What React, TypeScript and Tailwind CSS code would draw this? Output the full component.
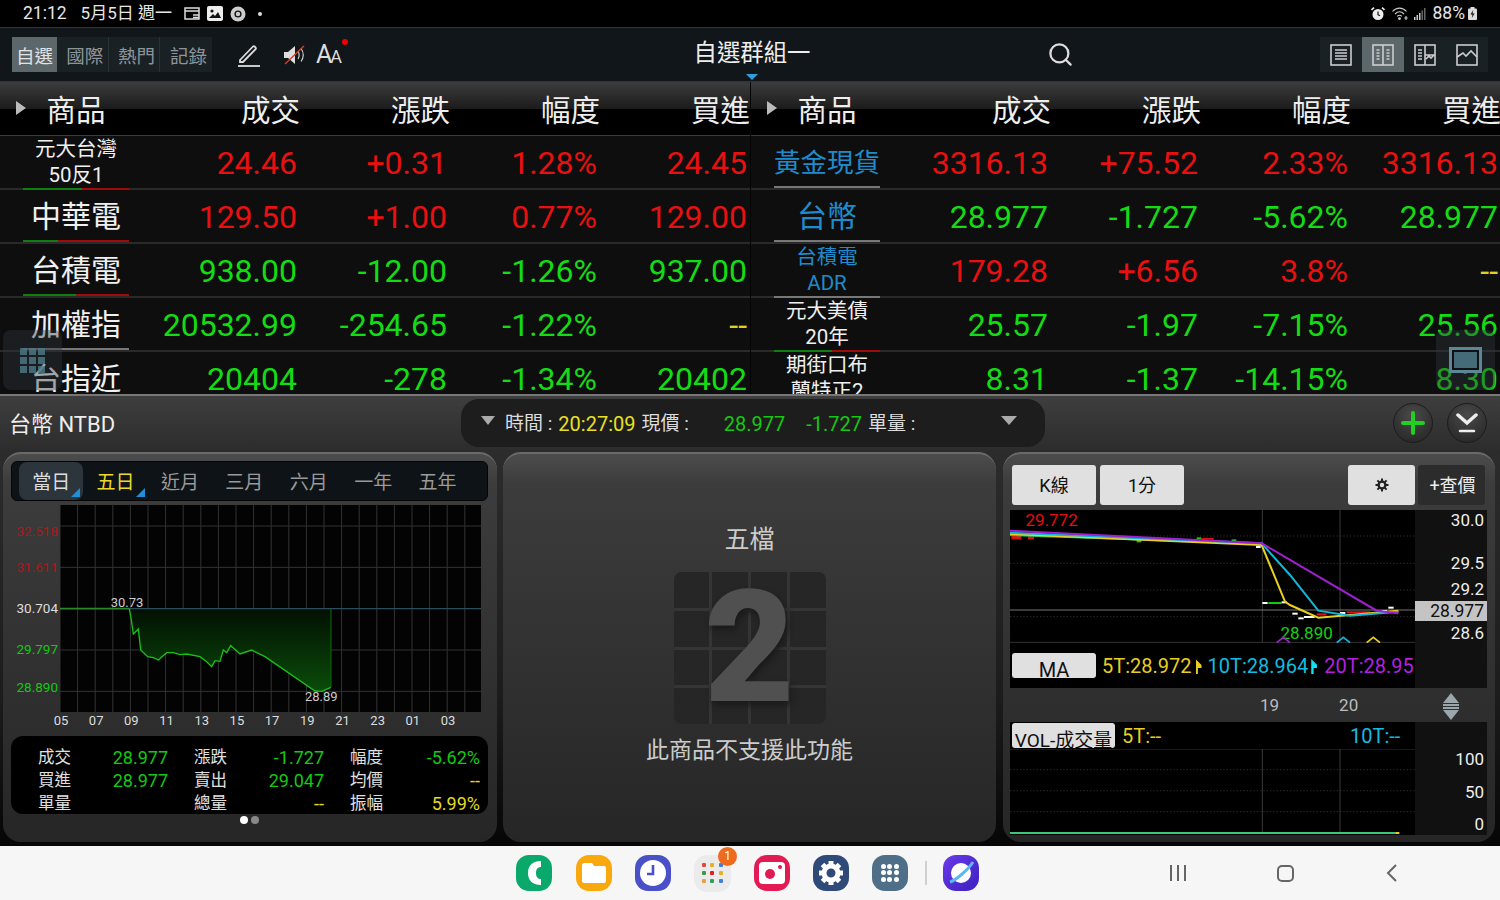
import { Search } from 'lucide-react';

type Row = {
  name: string[];
  blue?: boolean;
  small?: boolean;
  bar: string;
  cells: [string, string, string, string];
  color: string;
};

const RED = 'text-[#e81010]';
const GREEN = 'text-[#14dc14]';

const leftRows: Row[] = [
  { name: ['元大台灣', '50反1'], small: true, bar: 'w-[59px]', color: RED, cells: ['24.46', '+0.31', '1.28%', '24.45'] },
  { name: ['中華電'], bar: 'w-[35px]', color: RED, cells: ['129.50', '+1.00', '0.77%', '129.00'] },
  { name: ['台積電'], bar: 'w-[53px]', color: GREEN, cells: ['938.00', '-12.00', '-1.26%', '937.00'] },
  { name: ['加權指'], bar: 'gray', color: GREEN, cells: ['20532.99', '-254.65', '-1.22%', '--'] },
  { name: ['台指近'], bar: 'gray', color: GREEN, cells: ['20404', '-278', '-1.34%', '20402'] },
];

const rightRows: Row[] = [
  { name: ['黃金現貨'], blue: true, bar: 'gray', color: RED, cells: ['3316.13', '+75.52', '2.33%', '3316.13'] },
  { name: ['台幣'], blue: true, bar: 'gray', color: GREEN, cells: ['28.977', '-1.727', '-5.62%', '28.977'] },
  { name: ['台積電', 'ADR'], blue: true, small: true, bar: 'gray', color: RED, cells: ['179.28', '+6.56', '3.8%', '--'] },
  { name: ['元大美債', '20年'], small: true, bar: 'w-[58px]', color: GREEN, cells: ['25.57', '-1.97', '-7.15%', '25.56'] },
  { name: ['期街口布', '蘭特正2'], small: true, bar: 'gray', color: GREEN, cells: ['8.31', '-1.37', '-14.15%', '8.30'] },
];

const COLS = 'grid grid-cols-[152px_148px_150px_150px_150px]';

const nameSize = (row: Row) => {
  if (row.small) return 'text-[20.5px] leading-[26px]';
  if (row.name[0].length > 3) return 'pt-[4px] text-[26.5px] leading-[28px]';
  return 'pt-[4px] text-[30px] leading-[28px]';
};

const WatchTable = ({ rows, width }: { rows: Row[]; width: string }) => (
  <div className={`${width} shrink-0 overflow-hidden`}>
    <div className={`${COLS} relative h-[54px] items-center border-b border-[#3a3a3a] bg-[linear-gradient(#3c3c3c,#1c1c1c_50%,#000_52%)] pt-[5px] text-[29.5px] leading-[36px] text-[#eee]`}>
      <span className="absolute left-[16px] top-[19px] size-0 border-y-[7px] border-l-[10px] border-y-transparent border-l-[#bbb]" />
      <span className="text-center">商品</span>
      <span className="text-right">成交</span>
      <span className="text-right">漲跌</span>
      <span className="text-right">幅度</span>
      <span className="text-right">買進</span>
    </div>
    {rows.map((row) => (
      <div key={row.name[0]} className={`${COLS} h-[54px] border-b-2 border-[#2a2a2a] bg-[#0e0e0e]`}>
        <div className="flex h-[52px] flex-col items-center">
          <div
            className={`flex flex-1 flex-col items-center justify-center ${row.blue ? 'text-[#1e8ccc]' : 'text-[#f0f0f0]'} ${nameSize(row)}`}
          >
            {row.name.map((line) => (
              <span key={line}>{line}</span>
            ))}
          </div>
          {row.bar === 'gray' ? (
            <div className="h-[2px] w-[106px] shrink-0 bg-[#777]" />
          ) : (
            <div className="flex h-[2px] w-[106px] shrink-0 bg-[#a00c0c]">
              <div className={`${row.bar} bg-[#0f7d0f]`} />
            </div>
          )}
        </div>
        {row.cells.map((cell, i) => (
          <div
            key={i}
            className={`flex items-center justify-end pr-[3px] pt-[2px] text-[32px] leading-[28px] ${cell === '--' ? 'text-[#e0d020]' : row.color}`}
          >
            {cell}
          </div>
        ))}
      </div>
    ))}
  </div>
);

const StatusBar = () => (
  <div className="flex h-[27px] items-center bg-black pl-[23px] pr-[23px] text-[17.5px] text-[#e6e6e6]">
    <span>21:12</span>
    <span className="ml-[14px] text-[17px]">5月5日 週一</span>
    <svg className="ml-[12px]" width="16" height="13" viewBox="0 0 16 13" fill="none" stroke="#ddd" strokeWidth="1.5">
      <rect x="1" y="1" width="14" height="11" />
      <path d="M1 4h14M9 8h6M9 10.5h6" />
    </svg>
    <svg className="ml-[7px]" width="16" height="15" viewBox="0 0 16 15">
      <rect width="16" height="15" rx="2" fill="#eee" />
      <circle cx="5" cy="5" r="1.6" fill="#111" />
      <path d="M2 12l4-4 2 2 3-4 3 6z" fill="#111" />
    </svg>
    <svg className="ml-[7px]" width="16" height="16" viewBox="0 0 16 16" fill="none">
      <circle cx="8" cy="8" r="7.5" fill="#ccc" />
      <circle cx="8" cy="8" r="3.6" fill="#111" />
      <circle cx="8" cy="8" r="2.2" fill="#ccc" />
    </svg>
    <span className="ml-[12px] size-[4px] rounded-full bg-[#ddd]" />
    <svg className="ml-auto" width="14" height="14" viewBox="0 0 14 14">
      <circle cx="7" cy="7.5" r="5.5" fill="#eee" />
      <path d="M7 4.5v3.2l2 1" stroke="#111" strokeWidth="1.2" fill="none" />
      <path d="M0.5 3L3 0.7M13.5 3L11 0.7" stroke="#eee" strokeWidth="1.6" />
    </svg>
    <svg className="ml-[7px]" width="17" height="14" viewBox="0 0 17 14" fill="none" stroke="#ccc" strokeWidth="1.1">
      <path d="M0.5 4.5C4.5 0 10.5 0 14.5 4.5M3 7c2.8-3 6.2-3 9 0M5.2 9.4c1.5-1.5 3.1-1.5 4.6 0" />
      <circle cx="7.5" cy="11.6" r="0.9" fill="#ccc" />
      <path d="M14 9v4M12.3 11h3.4" />
    </svg>
    <svg className="ml-[5px]" width="12" height="12" viewBox="0 0 12 12" fill="#ccc">
      <rect x="0" y="9" width="1.5" height="3" />
      <rect x="2.5" y="7" width="1.5" height="5" />
      <rect x="5" y="5" width="1.5" height="7" />
      <rect x="7.5" y="2.5" width="1.5" height="9.5" fill="#666" />
      <rect x="10" y="0" width="1.5" height="12" fill="#666" />
    </svg>
    <span className="ml-[7px]">88%</span>
    <svg className="ml-[3px]" width="9" height="13" viewBox="0 0 9 13">
      <rect x="2.5" y="0" width="4" height="2" fill="#ddd" />
      <rect x="0" y="1.5" width="9" height="11.5" rx="1" fill="#ddd" />
      <path d="M5.2 3L2.5 7.5h2L3.8 11l2.8-4.5h-2z" fill="#111" />
    </svg>
  </div>
);

const tabs = ['自選', '國際', '熱門', '記錄'];

const ViewIcon = ({ kind }: { kind: number }) => (
  <svg width="22" height="22" viewBox="0 0 22 22" fill="none" stroke="#ccc" strokeWidth="1.6">
    <rect x="1" y="1" width="20" height="20" />
    {kind === 0 && <path d="M5 6h12M5 9h12M5 12h12M5 15h12" />}
    {kind === 1 && <path d="M11 1v20M4.5 6h3M4.5 9h3M4.5 12h3M4.5 15h3M14.5 6h3M14.5 9h3M14.5 12h3M14.5 15h3" />}
    {kind === 2 && <path d="M11 1v20M4 6h4M4 9h4M4 12h4M4 15h4M11 11h10M12 15l3-3 2 2 3-3" />}
    {kind === 3 && <path d="M1 13l6-4 3 3 5-5 6 6" />}
  </svg>
);

const Toolbar = () => (
  <div className="relative grid h-[55px] grid-cols-[1fr_auto_1fr] items-center border-y border-[#333] bg-[#11161a] pl-[12px] pr-[12px]">
    <div className="flex items-center">
      <div className="flex h-[35px] w-[200px] items-center bg-[#1a2125] text-[18.5px] leading-[24px] text-[#8e9599]">
        {tabs.map((tab, i) => (
          <span
            key={tab}
            className={`flex h-full items-center justify-center pt-[4px] ${i === 0 ? 'w-[45px] bg-[#5c676c] text-[#e2e2e2]' : 'w-[51.6px] border-r border-[#2a3338] pl-[5px] last:border-r-0'}`}
          >
            {tab}
          </span>
        ))}
      </div>
      <svg className="ml-[26px]" width="22" height="24" viewBox="0 0 22 24" fill="none" stroke="#ddd" strokeWidth="1.8">
        <path d="M2 17L15 3.5c1-1 3.6 1.4 2.6 2.6L5 19H2z" />
        <path d="M0 23h22" />
      </svg>
      <svg className="ml-[23px]" width="24" height="22" viewBox="0 0 24 22">
        <path d="M1 8h4l7-6v18l-7-6H1z" fill="#ddd" />
        <path d="M15 7c1.500 2 1.500 6 0 8M18 4.500c3 3.500 3 9.500 0 13" stroke="#ddd" strokeWidth="1.100" fill="none" />
        <path d="M2 20L21 2" stroke="#d04020" strokeWidth="1.400" />
      </svg>
      <span className="relative ml-[9px] flex items-baseline text-[#ddd]">
        <span className="text-[25px] leading-none">A</span>
        <span className="-ml-[2px] text-[18px] leading-none">A</span>
        <span className="absolute -right-[6px] -top-[3px] size-[6px] rounded-full bg-[#f00000]" />
      </span>
    </div>
    <span className="translate-x-[2px] -translate-y-[1px] text-[23.4px] text-[#eee]">自選群組一</span>
    <div className="flex items-center">
      <Search className="ml-[239px] text-[#ddd]" size={27} strokeWidth={2} />
      <div className="ml-auto flex h-[35px] w-[168px] items-center bg-[#1a2125]">
        {[0, 1, 2, 3].map((kind) => (
          <span key={kind} className={`flex h-full w-[42px] items-center justify-center ${kind === 1 ? 'bg-[#5c676c]' : ''}`}>
            <ViewIcon kind={kind} />
          </span>
        ))}
      </div>
    </div>
    <span className="absolute bottom-[1px] left-[746px] size-0 border-x-[6px] border-t-[6px] border-x-transparent border-t-[#2f9fe0]" />
  </div>
);

const IntradayChart = () => {
  const line =
    '388,326 394,360 400,402 415,387 422,450 443,470 460,473 475,480 500,458 520,458 540,464 560,462 600,470 620,485 635,500 645,482 660,484 670,450 680,458 692,437 720,462 755,450 795,470 945,573 965,574 993,562';
  return (
    <svg width="421" height="207" viewBox="180 15 1263 621" className="shrink-0">
      <defs>
        <linearGradient id="fill" x1="0" y1="0" x2="0" y2="1">
          <stop offset="0" stopColor="#021002" />
          <stop offset="1" stopColor="#0a4c0a" />
        </linearGradient>
      </defs>
      <rect x="180" y="15" width="1263" height="621" fill="#030303" />
      {Array.from({ length: 24 }, (_, i) => (
        <line key={i} x1={180 + i * 52.8} x2={180 + i * 52.8} y1="15" y2="636" stroke="#333" strokeWidth="3" />
      ))}
      {[78, 202, 450, 574].map((y) => (
        <line key={y} x1="180" x2="1443" y1={y} y2={y} stroke="#333" strokeWidth="3" />
      ))}
      <polygon points={`388,326 ${line} 993,326`} fill="url(#fill)" />
      <line x1="388" x2="1443" y1="326" y2="326" stroke="#2f4c5c" strokeWidth="4" />
      <line x1="180" x2="388" y1="326" y2="326" stroke="#2a8a2a" strokeWidth="5" />
      <polyline points={line} fill="none" stroke="#18c018" strokeWidth="4" />
      <line x1="993" x2="993" y1="326" y2="562" stroke="#0d6a0d" strokeWidth="3" />
      <text x="381" y="322" textAnchor="middle" fontSize="39" fill="#ccc">30.73</text>
      <text x="964" y="604" textAnchor="middle" fontSize="39" fill="#ccc">28.89</text>
    </svg>
  );
};

const priceAxis = [
  { label: '32.518', cls: 'mt-[18px] text-[#a81a1a]' },
  { label: '31.611', cls: 'mt-[20px] text-[#a81a1a]' },
  { label: '30.704', cls: 'mt-[25px] text-[#ddd]' },
  { label: '29.797', cls: 'mt-[25px] text-[#14c814]' },
  { label: '28.890', cls: 'mt-[22px] text-[#14c814]' },
];

const ranges = ['當日', '五日', '近月', '三月', '六月', '一年', '五年'];

const quoteCells = [
  ['成交', '28.977', '漲跌', '-1.727', '幅度', '-5.62%'],
  ['買進', '28.977', '賣出', '29.047', '均價', '--'],
  ['單量', '', '總量', '--', '振幅', '5.99%'],
];

const PANEL =
  'relative h-[390px] rounded-[18px] border-t-2 border-[#6a6a6a] bg-[linear-gradient(#4c4c4c,#3c3c3c_30px,#262626)]';

const LeftPanel = () => (
  <div className={`${PANEL} w-[494px] pl-[8px] pr-[9px] pt-[7px]`}>
    <div className="flex h-[40px] rounded-[6px] border border-[#050505] bg-[#0e1317] pl-[7px] text-[19px] leading-[26px] text-[#9a9a9a]">
      {ranges.map((r, i) => (
        <span
          key={r}
          className={`relative flex w-[64.4px] items-center justify-center pt-[3px] ${i === 0 ? 'rounded-[8px] bg-[#2b353b] text-[#ddd]' : ''} ${i === 1 ? 'text-[#eed82a]' : ''}`}
        >
          {r}
          {i < 2 && (
            <span className="absolute bottom-[3px] right-[3px] size-0 border-b-[9px] border-l-[9px] border-b-[#1e90d8] border-l-transparent" />
          )}
        </span>
      ))}
    </div>
    <div className="mt-[4px] flex h-[207px]">
      <div className="flex w-[47px] flex-col items-end text-[13.5px] leading-[16px]">
        {priceAxis.map((p) => (
          <span key={p.label} className={p.cls}>
            {p.label}
          </span>
        ))}
      </div>
      <span className="w-[2px]" />
      <IntradayChart />
    </div>
    <div className="flex h-[17px] pl-[32.400px] text-[13px] leading-[17px] text-[#ddd]">
      {['05', '07', '09', '11', '13', '15', '17', '19', '21', '23', '01', '03'].map((t) => (
        <span key={t} className="w-[35.2px] text-center">
          {t}
        </span>
      ))}
    </div>
    <div className="mt-[7px] grid h-[78px] grid-cols-[60px_97px_59px_97px_59px_97px] content-center rounded-[12px] bg-black pt-[10px] text-[18px] leading-[23px]">
      {quoteCells.flat().map((cell, i) => {
        const isLabel = i % 2 === 0;
        const color = isLabel
          ? 'text-[#e0e0e0] text-[16.5px]'
          : cell === '--' || cell === '5.99%'
            ? 'text-[#e4dc20]'
            : 'text-[#14c814]';
        return (
          <span key={i} className={`text-right ${color}`}>
            {cell}
          </span>
        );
      })}
    </div>
    <div className="mt-[2px] flex justify-center gap-[3px]">
      <span className="size-[8px] rounded-full bg-white" />
      <span className="size-[8px] rounded-full bg-[#888]" />
    </div>
  </div>
);

const MiddlePanel = () => (
  <div className={`${PANEL} flex w-[493px] flex-col items-center pt-[69px]`}>
    <span className="text-[25px] leading-[34px] text-[#ccc]">五檔</span>
    <div className="relative mt-[15px] grid size-[152px] grid-cols-4 grid-rows-4 gap-[3px] overflow-hidden rounded-[8px] bg-[#353535]">
      {Array.from({ length: 16 }, (_, i) => (
        <span key={i} className="bg-[#262626]" />
      ))}
      <span className="absolute inset-0 flex items-center justify-center text-[156px] font-black leading-none text-[#505050] [text-shadow:2px_4px_6px_#1a1a1a]">
        2
      </span>
    </div>
    <span className="mt-[11px] text-[23px] leading-[32px] text-[#ccc]">此商品不支援此功能</span>
  </div>
);

const KChart = () => (
  <svg width="405" height="133" viewBox="30 330 1215 399" className="block">
    <rect x="30" y="330" width="1215" height="399" fill="#000" />
    {[408, 490, 570, 650].map((y) => (
      <line key={y} x1="30" x2="1245" y1={y} y2={y} stroke="#444" strokeWidth="2" strokeDasharray="4 6" />
    ))}
    {[787, 1020].map((x) => (
      <line key={x} x1={x} x2={x} y1="330" y2="729" stroke="#3a3a3a" strokeWidth="3" />
    ))}
    <line x1="30" x2="1245" y1="630" y2="630" stroke="#777" strokeWidth="3" />
    <line x1="30" x2="1245" y1="727" y2="727" stroke="#333" strokeWidth="3" />
    <g fill="#e01010">
      <rect x="34" y="404" width="30" height="14" />
      <rect x="84" y="406" width="18" height="12" />
      <rect x="120" y="406" width="34" height="6" />
      <rect x="605" y="414" width="36" height="5" />
      <rect x="950" y="640" width="30" height="6" />
      <rect x="1040" y="634" width="70" height="5" />
      <rect x="1170" y="632" width="26" height="6" />
    </g>
    <g fill="#14c814">
      <rect x="410" y="420" width="14" height="7" />
      <rect x="590" y="412" width="14" height="5" />
      <rect x="695" y="418" width="14" height="5" />
      <rect x="750" y="428" width="26" height="7" />
      <rect x="805" y="606" width="40" height="6" />
    </g>
    <g fill="#fff">
      <rect x="768" y="438" width="14" height="6" />
      <rect x="787" y="606" width="16" height="6" />
      <rect x="845" y="604" width="16" height="6" />
      <rect x="877" y="638" width="16" height="6" />
      <rect x="895" y="652" width="16" height="6" />
      <rect x="912" y="648" width="32" height="6" />
      <rect x="1020" y="636" width="16" height="6" />
      <rect x="1145" y="630" width="16" height="6" />
      <rect x="1165" y="620" width="16" height="6" />
    </g>
    <polyline points="30,405 750,430 790,436" fill="none" stroke="#20c060" strokeWidth="6" />
    <polyline points="30,402 785,435 855,605 870,615 955,653 1050,645 1195,632" fill="none" stroke="#e8d020" strokeWidth="6" />
    <polyline points="30,398 785,430 870,525 955,632 1050,647 1195,635" fill="none" stroke="#10b8d8" strokeWidth="6" />
    <polyline points="30,392 785,430 1130,632 1195,640" fill="none" stroke="#a020d0" strokeWidth="6" />
    <text x="155" y="378" textAnchor="middle" fontSize="51" fill="#e01010">29.772</text>
    <text x="920" y="718" textAnchor="middle" fontSize="51" fill="#14d014">28.890</text>
    <path d="M830 728l20-16 20 16" fill="none" stroke="#a020d0" strokeWidth="5" />
    <path d="M1010 728l20-16 20 16" fill="none" stroke="#10b8d8" strokeWidth="5" />
    <path d="M1100 728l20-16 20 16" fill="none" stroke="#e8d020" strokeWidth="5" />
  </svg>
);

const VolChart = () => (
  <svg width="405" height="86" viewBox="30 328 1215 258" className="block">
    <rect x="30" y="328" width="1215" height="258" fill="#000" />
    <line x1="30" x2="1245" y1="328" y2="328" stroke="#333" strokeWidth="3" />
    {[390, 453, 516].map((y) => (
      <line key={y} x1="30" x2="1245" y1={y} y2={y} stroke="#444" strokeWidth="2" strokeDasharray="4 6" />
    ))}
    {[787, 1020].map((x) => (
      <line key={x} x1={x} x2={x} y1="328" y2="580" stroke="#3a3a3a" strokeWidth="3" />
    ))}
    <line x1="30" x2="1190" y1="580" y2="580" stroke="#3cc878" strokeWidth="6" />
    <line x1="1188" x2="1198" y1="580" y2="580" stroke="#e8d020" strokeWidth="6" />
  </svg>
);

const CHIP = 'flex items-center justify-center rounded-[3px] bg-[#e0e0e0] text-[#111]';
const FLAG = 'mt-[6px] h-[15px] w-[6px] shrink-0 [clip-path:polygon(0_0,100%_40%,100%_60%,40%_60%,40%_100%,0_100%)]';

const RightPanel = () => (
  <div className={`${PANEL} w-[492px] pl-[7px] pr-[8px] pt-[11px]`}>
    <div className="flex h-[40px] pl-[2px] text-[18px]">
      <span className={`${CHIP} w-[84px] pt-[1px]`}>K線</span>
      <span className={`${CHIP} ml-[4px] w-[84px] pt-[1px]`}>1分</span>
      <span className={`${CHIP} ml-auto w-[67px]`}>
        <svg width="14" height="14" viewBox="0 0 14 14">
          <circle cx="7" cy="7" r="3.4" fill="none" stroke="#222" strokeWidth="2.400" />
          <path d="M7 0.500v3M7 10.500v3M0.500 7h3M10.500 7h3M2.400 2.400l2 2M9.600 9.600l2 2M11.600 2.400l-2 2M4.400 9.600l-2 2" stroke="#222" strokeWidth="2" />
        </svg>
      </span>
      <span className="ml-[3px] mr-[2px] flex w-[67px] items-center justify-center rounded-[3px] bg-[#2c2c2c] pl-[2px] pt-[1px] text-[#eee]">+查價</span>
    </div>
    <div className="mt-[5px] flex h-[178px]">
      <div className="w-[405px]">
        <KChart />
        <div className="flex h-[45px] items-start overflow-hidden whitespace-nowrap bg-black pl-[2px] pt-[10px] text-[20px] leading-[26px]">
          <span className={`${CHIP} h-[25px] w-[84px] shrink-0 items-end overflow-hidden text-[20px]`}>
            <span className="translate-y-[5px]">MA</span>
          </span>
          <span className="ml-[6px] text-[#e6cf20]">5T:28.972</span>
          <span className={`${FLAG} ml-[4px] bg-[#e6cf20]`} />
          <span className="ml-[6px] text-[#12bce0]">10T:28.964</span>
          <span className={`${FLAG} ml-[3px] bg-[#12e0f0]`} />
          <span className="ml-[7px] text-[#b420e0]">20T:28.95</span>
        </div>
      </div>
      <div className="flex w-[72px] flex-col items-end bg-[#111] text-[17px] leading-[20px] text-[#eee]">
        <span className="pr-[3px]">30.0</span>
        <span className="mt-[23px] pr-[3px]">29.5</span>
        <span className="mt-[6px] pr-[3px]">29.2</span>
        <span className="mt-[2px] w-full bg-[#c4c4c4] pr-[3px] text-right text-[17.5px] text-[#111]">28.977</span>
        <span className="mt-[2px] pr-[3px]">28.6</span>
      </div>
    </div>
    <div className="flex h-[34px] items-center pt-[2px] text-[17px] text-[#bbb]">
      <span className="ml-[250px]">19</span>
      <span className="ml-[60px]">20</span>
      <span className="ml-[85px] flex flex-col items-center gap-[1px]">
        <span className="size-0 border-x-[8px] border-b-[10px] border-x-transparent border-b-[#9aa6ac]" />
        <span className="h-[2px] w-[16px] bg-[#9aa6ac]" />
        <span className="h-[2px] w-[16px] bg-[#9aa6ac]" />
        <span className="size-0 border-x-[8px] border-t-[10px] border-x-transparent border-t-[#9aa6ac]" />
      </span>
    </div>
    <div className="flex h-[113px]">
      <div className="w-[405px]">
        <div className="flex h-[27px] items-start bg-black pl-[2px] pt-[1px] text-[20px] leading-[26px]">
          <span className={`${CHIP} h-[25px] w-[103px] shrink-0 items-end overflow-hidden whitespace-nowrap text-[19px]`}>
            <span className="translate-y-[6px]">VOL-成交量</span>
          </span>
          <span className="ml-[7px] text-[#e6cf20]">5T:--</span>
          <span className="ml-[189px] text-[#12bce0]">10T:--</span>
        </div>
        <VolChart />
      </div>
      <div className="flex w-[72px] flex-col items-end bg-[#111] pr-[3px] text-[17px] leading-[20px] text-[#eee]">
        <span className="mt-[27px]">100</span>
        <span className="mt-[13px]">50</span>
        <span className="mt-[12px]">0</span>
      </div>
    </div>
  </div>
);

const RoundButton = ({ children }: { children: React.ReactNode }) => (
  <span className="flex size-[40px] items-center justify-center rounded-full border border-[#1c1c1c] bg-[radial-gradient(circle_at_50%_30%,#4a4a4a,#222)]">
    {children}
  </span>
);

const Ticker = () => (
  <div className="ml-[461px] flex h-[48px] w-[584px] items-center rounded-[18px] bg-[#1d1d1d] pl-[20px] pt-[2px] text-[19px] text-[#ddd]">
    <span className="-mt-[7px] size-0 border-x-[7px] border-t-[9px] border-x-transparent border-t-[#aaa]" />
    <span className="ml-[10px] pt-[1px]">時間 :</span>
    <span className="ml-[6px] text-[20px] text-[#e8e020]">20:27:09</span>
    <span className="ml-[6px] pt-[1px]">現價 :</span>
    <span className="ml-[35px] text-[20px] text-[#14c814]">28.977</span>
    <span className="ml-[21px] text-[20px] text-[#14c814]">-1.727</span>
    <span className="ml-[6px] pt-[1px]">單量 :</span>
    <span className="-mt-[7px] ml-[86px] size-0 border-x-[8px] border-t-[9px] border-x-transparent border-t-[#aaa]" />
  </div>
);

const apps = ['#e0483a', '#e8b020', '#3a80e0', '#3a9a50', '#e02020', '#e8b020', '#e8a040', '#30a060', '#4080e0'];

const Dock = () => (
  <div className="relative flex h-[54px] items-center bg-[#f6f6f6] pl-[516px]">
    <span className="flex size-[36px] items-center justify-center rounded-[13px] bg-[#0aa86a]">
      <svg width="18" height="26" viewBox="0 0 18 26">
        <path d="M16 1c-8 0-13 4-13 12s5 12 13 12v-6c-3 0-5-2-5-6s2-6 5-6z" fill="#fff" />
      </svg>
    </span>
    <span className="ml-[24px] flex size-[36px] items-center justify-center rounded-[13px] bg-[#f9a90e]">
      <svg width="24" height="20" viewBox="0 0 24 20">
        <path d="M2 0h8l2 3h10a2 2 0 012 2v13a2 2 0 01-2 2H2a2 2 0 01-2-2V2a2 2 0 012-2z" fill="#fff" />
      </svg>
    </span>
    <span className="ml-[23px] flex size-[36px] items-center justify-center rounded-[13px] bg-[#4a50c8]">
      <svg width="26" height="26" viewBox="0 0 26 26">
        <circle cx="13" cy="13" r="13" fill="#fff" />
        <path d="M13 5v9H7" fill="none" stroke="#4a50c8" strokeWidth="2.600" />
      </svg>
    </span>
    <span className="relative ml-[23px] grid size-[37px] grid-cols-3 place-items-center rounded-[13px] bg-[#ebebeb] p-[6px]">
      {apps.map((c, i) => (
        <svg key={i} width="4" height="4" viewBox="0 0 4 4">
          <rect width="4" height="4" rx="1" fill={c} />
        </svg>
      ))}
      <span className="absolute -right-[6px] -top-[8px] flex size-[19px] items-center justify-center rounded-full bg-[#ee6a1e] text-[12px] text-white">
        1
      </span>
    </span>
    <span className="ml-[23px] flex size-[36px] items-center justify-center rounded-[13px] bg-[#e31b54]">
      <svg width="26" height="22" viewBox="0 0 26 22">
        <rect width="26" height="22" rx="4" fill="#fff" />
        <circle cx="11" cy="12" r="5" fill="#e31b54" />
        <circle cx="21" cy="5" r="2" fill="#e31b54" />
      </svg>
    </span>
    <span className="ml-[23px] flex size-[36px] items-center justify-center rounded-[13px] bg-[#2f4a78]">
      <svg width="26" height="26" viewBox="0 0 26 26" fill="none" stroke="#fff">
        <circle cx="13" cy="13" r="7" strokeWidth="5" />
        <path d="M13 1v5M13 20v5M1 13h5M20 13h5M4.500 4.500l3.500 3.500M18 18l3.500 3.500M21.500 4.500L18 8M8 18l-3.500 3.500" strokeWidth="5" />
      </svg>
    </span>
    <span className="ml-[23px] grid size-[36px] grid-cols-3 place-items-center rounded-[13px] bg-[#4f6f88] p-[8px]">
      {Array.from({ length: 9 }, (_, i) => (
        <span key={i} className="size-[5px] rounded-full bg-white" />
      ))}
    </span>
    <span className="ml-[17px] h-[24px] w-[2px] bg-[#d0d0d0]" />
    <span className="ml-[16px] flex size-[36px] items-center justify-center rounded-[13px] bg-[linear-gradient(135deg,#6a3ae8,#3a20c0)]">
      <svg width="30" height="30" viewBox="0 0 30 30" fill="none">
        <circle cx="15" cy="15" r="10" fill="#fff" />
        <path d="M4 24C10 22 22 12 27 4" stroke="#5ab8f0" strokeWidth="3" />
      </svg>
    </span>
    <span className="ml-[191px] flex gap-[5px]">
      <span className="h-[16px] w-[2px] bg-[#666]" />
      <span className="h-[16px] w-[2px] bg-[#666]" />
      <span className="h-[16px] w-[2px] bg-[#666]" />
    </span>
    <span className="ml-[91px] size-[17px] rounded-[5px] border-2 border-[#666]" />
    <svg className="ml-[92px]" width="11" height="18" viewBox="0 0 11 18" fill="none" stroke="#666" strokeWidth="2">
      <path d="M10 1L2 9l8 8" />
    </svg>
  </div>
);

export default function App() {
  return (
    <div className="h-[900px] w-[1500px] overflow-hidden bg-black [font-family:Roboto,'Noto_Sans_CJK_TC',sans-serif]">
      <StatusBar />
      <Toolbar />
      <div className="relative flex h-[314px] overflow-hidden border-b-[2px] border-[#777]">
        <WatchTable rows={leftRows} width="w-[750px]" />
        <span className="w-[1px] shrink-0 bg-[#050505]" />
        <WatchTable rows={rightRows} width="w-[749px]" />
        <div className="absolute left-[3px] top-[248px] flex h-[60px] w-[59px] items-center justify-center rounded-[8px] bg-[#30383c]/40">
          <div className="grid grid-cols-3 gap-[2px]">
            {Array.from({ length: 9 }, (_, i) => (
              <span key={i} className="h-[7px] w-[7px] bg-[#4d7a8a]/80" />
            ))}
          </div>
        </div>
        <div className="absolute right-[5px] top-[248px] flex h-[60px] w-[59px] items-center justify-center rounded-[8px] bg-[#30383c]/40">
          <span className="h-[26px] w-[33px] border-[3px] border-[#5f8a9a]/90 bg-[#456a78] shadow-[inset_0_0_0_2px_#111]" />
        </div>
      </div>
      <div className="h-[450px] bg-[linear-gradient(#3e3e3e,#2c2c2c_56px,#1c1c1c_300px,#060606)]">
        <div className="relative flex h-[56px] items-center pb-[2px]">
          <span className="absolute left-[9px] top-[12px] text-[22px] text-[#eee]">台幣 NTBD</span>
          <Ticker />
          <span className="ml-[348px]">
            <RoundButton>
              <svg width="24" height="24" viewBox="0 0 24 24" stroke="#22d022" strokeWidth="4" strokeLinecap="round">
                <path d="M12 2v20M2 12h20" />
              </svg>
            </RoundButton>
          </span>
          <span className="ml-[14px]">
            <RoundButton>
              <svg width="22" height="22" viewBox="0 0 22 22" fill="none" stroke="#eee" strokeWidth="3.500" strokeLinecap="round">
                <path d="M2 3l9 8 9-8" />
                <path d="M4 19h14" strokeWidth="2.500" />
              </svg>
            </RoundButton>
          </span>
        </div>
        <div className="flex gap-[6px] pl-[3px]">
          <LeftPanel />
          <MiddlePanel />
          <span className="-ml-[5px] pl-[6px]">
            <RightPanel />
          </span>
        </div>
      </div>
      <Dock />
    </div>
  );
}
